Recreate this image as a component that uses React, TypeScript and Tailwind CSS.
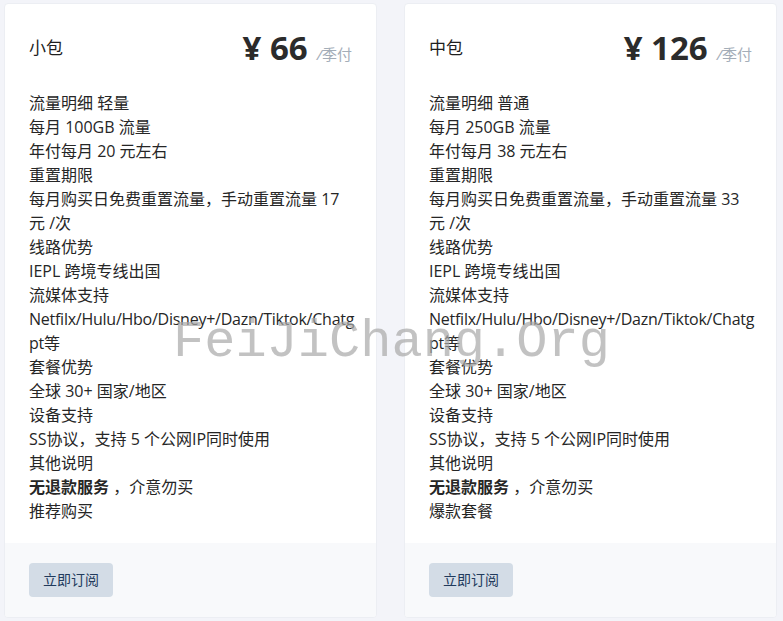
import React from 'react';

type Line = { text: string; bold?: string };

// the streaming line is broken where the reference breaks it
const streaming = 'Netfilx/Hulu/Hbo/Disney+/Dazn/Tiktok/Chatg\npt等';

const plans: { name: string; price: string; lines: Line[] }[] = [
    {
        name: '小包',
        price: '66',
        lines: [
            { text: '流量明细 轻量' },
            { text: '每月 100GB 流量' },
            { text: '年付每月 20 元左右' },
            { text: '重置期限' },
            { text: '每月购买日免费重置流量，手动重置流量 17 元 /次' },
            { text: '线路优势' },
            { text: 'IEPL 跨境专线出国' },
            { text: '流媒体支持' },
            { text: streaming },
            { text: '套餐优势' },
            { text: '全球 30+ 国家/地区' },
            { text: '设备支持' },
            { text: 'SS协议，支持 5 个公网IP同时使用' },
            { text: '其他说明' },
            { bold: '无退款服务', text: ' ，介意勿买' },
            { text: '推荐购买' },
        ],
    },
    {
        name: '中包',
        price: '126',
        lines: [
            { text: '流量明细 普通' },
            { text: '每月 250GB 流量' },
            { text: '年付每月 38 元左右' },
            { text: '重置期限' },
            { text: '每月购买日免费重置流量，手动重置流量 33 元 /次' },
            { text: '线路优势' },
            { text: 'IEPL 跨境专线出国' },
            { text: '流媒体支持' },
            { text: streaming },
            { text: '套餐优势' },
            { text: '全球 30+ 国家/地区' },
            { text: '设备支持' },
            { text: 'SS协议，支持 5 个公网IP同时使用' },
            { text: '其他说明' },
            { bold: '无退款服务', text: ' ，介意勿买' },
            { text: '爆款套餐' },
        ],
    },
];

const PlanCard = ({ plan }: { plan: (typeof plans)[number] }) => (
    <div className="flex flex-col rounded border border-[#eceef3] bg-white overflow-hidden">
        <div className="px-6 pt-6 pb-5">
            {/* header */}
            <div className="flex h-10 items-center justify-between">
                <span className="text-[17px] text-[#1f1f1f]">{plan.name}</span>
                <div className="flex items-baseline">
                    <span className="text-[33px] font-bold leading-10 text-[#2b2b2b]">¥ {plan.price}</span>
                    <span className="ml-[9px] text-[15px] text-[#a3adb8]">
                        <span className="italic">/</span>季付
                    </span>
                </div>
            </div>
            {/* details */}
            <div className="mt-[23px] text-[16px] leading-6 text-[#262626]">
                {plan.lines.map((l, i) => (
                    <div key={i} className={l.text.includes('\n') ? 'whitespace-pre tracking-[-0.25px]' : ''}>
                        {l.bold && <span className="font-bold">{l.bold}</span>}
                        {l.text}
                    </div>
                ))}
            </div>
        </div>
        <div className="mt-auto bg-[#f8f9fb] px-6 py-5">
            <button className="h-[34px] rounded bg-[#d3dce6] px-[14px] text-sm text-[#213a5c]">立即订阅</button>
        </div>
    </div>
);

export default function App() {
    return (
        <div
            className="relative min-h-screen bg-[#f3f4f9] pl-1 pt-[3px]"
            style={{ fontFamily: '"Open Sans", "Noto Sans CJK SC", sans-serif' }}
        >
            <div className="grid grid-cols-[373px_373px] gap-[27px]">
                {plans.map((p) => (
                    <PlanCard key={p.name} plan={p} />
                ))}
            </div>
            {/* watermark */}
            <div className="pointer-events-none absolute left-[173px] top-[317px] font-['Liberation_Mono',monospace] text-[52px] leading-none text-[#a8a8a8]/70">
                FeiJiChang.Org
            </div>
        </div>
    );
}
